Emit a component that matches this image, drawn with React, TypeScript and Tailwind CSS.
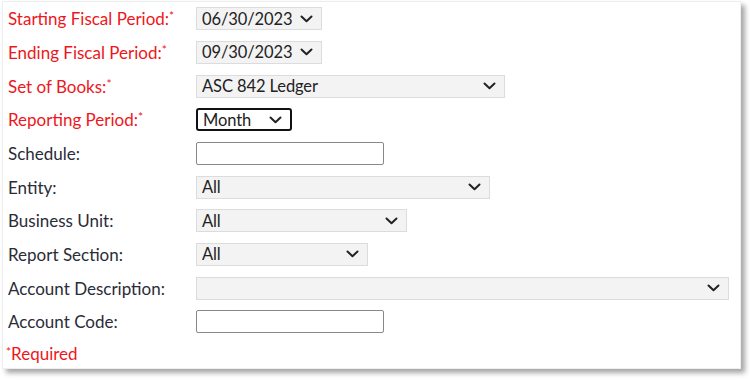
const font = { fontFamily: "Lato, 'Open Sans', sans-serif" }

function Chevron() {
  return (
    <svg width="13" height="8" viewBox="0 0 13 8" className="shrink-0">
      <path d="M1.5 1.5 L6.5 6.2 L11.5 1.5" fill="none" stroke="#222" strokeWidth="2" strokeLinecap="round" strokeLinejoin="round" />
    </svg>
  )
}

function Select({ value, width, focused }: { value: string; width: string; focused?: boolean }) {
  return (
    <div
      className={`${width} h-[23px] flex items-center justify-between pl-[5px] pr-[8px] ${
        focused ? "border-2 border-[#111] rounded-[3px] bg-white pl-[4px] pr-[7px]" : "border border-[#dcdcdc] bg-[#f3f3f3]"
      }`}
    >
      <span className="text-[16.5px] leading-none text-[#222] tracking-[-0.1px]">{value}</span>
      <Chevron />
    </div>
  )
}

function TextInput() {
  return <div className="w-[188px] h-[23px] border border-[#888] rounded-[2px] bg-white" />
}

function Label({ text, required }: { text: string; required?: boolean }) {
  return (
    <div className={`w-[193px] shrink-0 pl-[5px] text-[17px] leading-none ${required ? "text-[#ee1620]" : "text-[#2a2c38]"}`}>
      {text}
      {required && <span className="text-[12px] align-[5px]">*</span>}
    </div>
  )
}

export default function App() {
  const rows: { label: string; required?: boolean; field: React.ReactNode }[] = [
    { label: "Starting Fiscal Period:", required: true, field: <Select value="06/30/2023" width="w-[126px]" /> },
    { label: "Ending Fiscal Period:", required: true, field: <Select value="09/30/2023" width="w-[126px]" /> },
    { label: "Set of Books:", required: true, field: <Select value="ASC 842 Ledger" width="w-[309px]" /> },
    { label: "Reporting Period:", required: true, field: <Select value="Month" width="w-[96px]" focused /> },
    { label: "Schedule:", field: <TextInput /> },
    { label: "Entity:", field: <Select value="All" width="w-[294px]" /> },
    { label: "Business Unit:", field: <Select value="All" width="w-[211px]" /> },
    { label: "Report Section:", field: <Select value="All" width="w-[172px]" /> },
    { label: "Account Description:", field: <Select value="" width="w-[533px]" /> },
    { label: "Account Code:", field: <TextInput /> },
  ]

  return (
    <div className="w-[750px] h-[381px] bg-white overflow-hidden" style={font}>
      <div className="ml-[2px] mt-[1px] w-[739px] h-[368px] bg-white border border-[#eeeeee] shadow-[4px_4px_5px_rgba(0,0,0,0.35)]">
        {rows.map((r) => (
          <div key={r.label} className="h-[33.67px] flex items-center">
            <Label text={r.label} required={r.required} />
            {r.field}
          </div>
        ))}
        <div className="h-[30px] flex items-center pl-[3px] text-[17px] leading-none text-[#ee1620]">
          <span className="text-[12px] self-start mt-[7px]">*</span>Required
        </div>
      </div>
    </div>
  )
}
